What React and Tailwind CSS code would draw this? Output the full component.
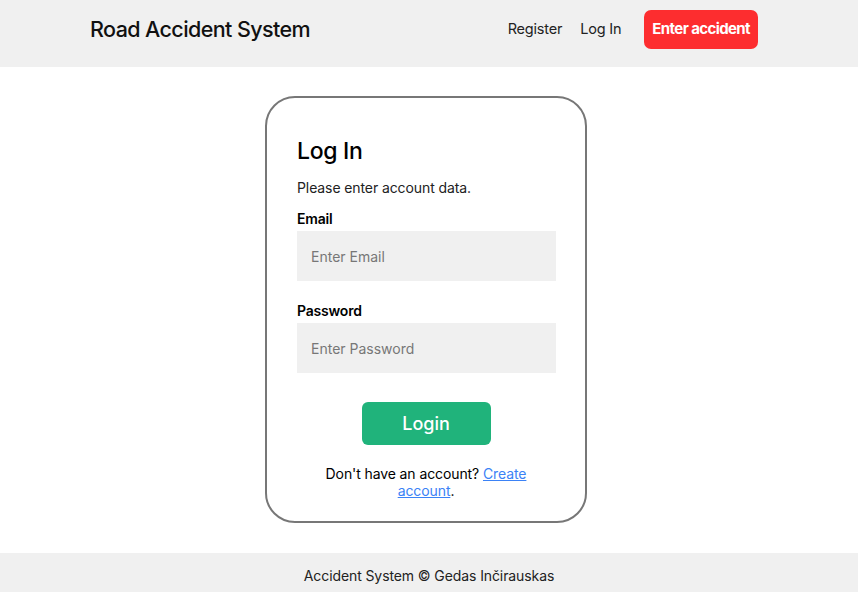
export default function App() {
  return (
    <div className="min-h-[592px] flex flex-col bg-white text-black" style={{ fontFamily: "Inter, 'Noto Sans', sans-serif" }}>
      <header className="h-[67px] bg-[#f0f0f0] flex items-center pl-[90px] pr-[100px] pb-[9px]">
        <h1 className="text-[21.5px] font-medium tracking-[-0.6px] text-[#111]">Road Accident System</h1>
        <nav className="ml-auto flex items-center">
          <a className="text-[14.5px] tracking-[-0.2px] text-[#222] mr-[18px]">Register</a>
          <a className="text-[14.5px] tracking-[-0.2px] text-[#222] mr-[23px]">Log In</a>
          <button className="h-[39px] px-[8px] rounded-[7px] bg-[#fd2d2f] text-white text-[15px] font-bold tracking-[-0.6px]">
            Enter accident
          </button>
        </nav>
      </header>

      <main className="flex-1 flex justify-center pt-[29px] pb-[30px] pr-[6px]">
        <div className="w-[322px] h-[427px] border-2 border-[#777] rounded-[30px] px-[30px] pt-[38px]">
          <h2 className="text-[23px] font-medium leading-[30px] tracking-[-0.3px]">Log In</h2>
          <p className="text-[14px] tracking-[-0.1px] text-[#222] mt-[13px] leading-[18px]">Please enter account data.</p>
          <form className="mt-[13px]">
            <label className="block text-[14px] font-semibold tracking-[-0.2px] leading-[18px]">Email</label>
            <input
              className="mt-[3px] w-[259px] h-[50px] bg-[#f0f0f0] px-[14px] text-[14px] placeholder:text-[#777] outline-none"
              placeholder="Enter Email"
            />
            <label className="block text-[14px] font-semibold tracking-[-0.2px] leading-[18px] mt-[21px]">Password</label>
            <input
              type="password"
              className="mt-[3px] w-[259px] h-[50px] bg-[#f0f0f0] px-[14px] text-[14px] placeholder:text-[#777] outline-none"
              placeholder="Enter Password"
            />
            <div className="flex justify-center mt-[29px]">
              <button type="button" className="w-[129px] h-[43px] rounded-[6px] bg-[#20b37b] text-white text-[18px] font-medium">
                Login
              </button>
            </div>
          </form>
          <p className="text-center text-[14px] tracking-[-0.1px] leading-[17px] mt-[20px] px-[26px]">
            Don't have an account? <a className="text-[#3b82f6] underline">Create account</a>.
          </p>
        </div>
      </main>

      <footer className="h-[39px] bg-[#f0f0f0] flex items-center justify-center">
        <p className="text-[14px] tracking-[-0.1px] text-[#222] mt-[5px]">Accident System © Gedas Inčirauskas</p>
      </footer>
    </div>
  );
}
